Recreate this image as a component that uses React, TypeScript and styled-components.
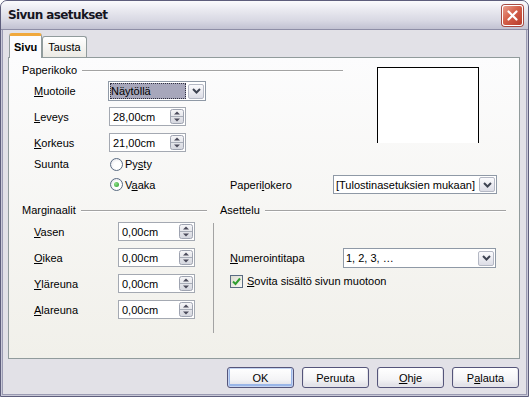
import styled, { createGlobalStyle } from 'styled-components';

const GlobalStyle = createGlobalStyle`
  html, body {
    margin: 0;
    padding: 0;
    background: #ffffff;
  }
  * {
    box-sizing: border-box;
  }
  body {
    font-family: "Liberation Sans", Arial, sans-serif;
    font-size: 11px;
    color: #000000;
  }
`;

const Window = styled.div`
  width: 529px;
  height: 397px;
  display: flex;
  flex-direction: column;
  background: #e2e1e7;
  border: 1px solid #5e5e7c;
  border-radius: 7px 7px 0 0;
  box-shadow: inset 0 0 0 1px #c9c9d8, inset 0 0 0 2px #9a9ab2;
  overflow: hidden;
`;

const TitleBar = styled.div`
  height: 29px;
  flex-shrink: 0;
  display: flex;
  align-items: center;
  justify-content: space-between;
  padding: 0 5px 0 7px;
  background: linear-gradient(#fbfbfd 0%, #e8e8ef 35%, #d8d8e3 70%, #c2c2d2 100%);
  border-bottom: 1px solid #8e8ea6;
`;

const Title = styled.span`
  font-family: "DejaVu Sans", "Liberation Sans", sans-serif;
  font-weight: bold;
  font-size: 12px;
  letter-spacing: -0.6px;
  color: #15151f;
`;

const CloseButton = styled.div`
  width: 21px;
  height: 21px;
  display: flex;
  align-items: center;
  justify-content: center;
  border: 1px solid #ffffff;
  border-radius: 3px;
  background: linear-gradient(135deg, #eaa08e 0%, #d4604a 45%, #b83c2c 100%);
  box-shadow: 0 0 0 1px #a84a42;
`;

const Body = styled.div`
  flex: 1;
  display: flex;
  flex-direction: column;
  padding: 3px 8px 0 7px;
`;

const TabStrip = styled.div`
  display: flex;
  align-items: flex-end;
  height: 24px;
  padding-left: 1px;
`;

const Tab = styled.div<{ $active?: boolean }>`
  position: relative;
  z-index: ${p => (p.$active ? 1 : 0)};
  height: ${p => (p.$active ? 25 : 21)}px;
  margin-bottom: ${p => (p.$active ? -1 : 0)}px;
  padding: 0 ${p => (p.$active ? 4 : 5)}px;
  display: flex;
  align-items: center;
  border: 1px solid #919b9c;
  border-top: ${p => (p.$active ? '3px solid #f0a83c' : '1px solid #919b9c')};
  border-bottom: none;
  border-radius: 3px 3px 0 0;
  background: ${p => (p.$active ? '#fcfcfe' : 'linear-gradient(#ffffff, #eceae4)')};
  font-weight: ${p => (p.$active ? 'bold' : 'normal')};
`;

const TabPanel = styled.div`
  height: 302px;
  display: flex;
  flex-direction: column;
  padding: 4px 13px 0 13px;
  border: 1px solid #919b9c;
  background: linear-gradient(#fcfcfd, #f1f0ea);
`;

const TopRow = styled.div`
  display: flex;
  align-items: flex-start;
`;

const FieldsColumn = styled.div`
  width: 321px;
  display: flex;
  flex-direction: column;
`;

const GroupHeader = styled.div`
  height: 16px;
  display: flex;
  align-items: center;
  white-space: nowrap;

  &::after {
    content: '';
    flex: 1;
    height: 1px;
    margin-left: 5px;
    background: #a3a3a3;
    box-shadow: 0 1px 0 #ffffff;
  }
`;

const FieldRow = styled.div<{ $top: number; $h?: number; $indent?: number }>`
  display: flex;
  align-items: center;
  margin-top: ${p => p.$top}px;
  height: ${p => p.$h ?? 19}px;
  padding-left: ${p => p.$indent ?? 12}px;
`;

const Label = styled.span<{ $w: number }>`
  width: ${p => p.$w}px;
  flex-shrink: 0;
  white-space: nowrap;
`;

const U = styled.span`
  text-decoration: underline;
`;

const SpinBox = styled.div<{ $w: number }>`
  width: ${p => p.$w}px;
  height: 19px;
  display: flex;
  align-items: center;
  justify-content: space-between;
  padding: 0 1px 0 3px;
  background: #ffffff;
  border: 1px solid #a4a9b2;
`;

const SpinButton = styled.div`
  width: 14px;
  height: 15px;
  display: flex;
`;

const Select = styled.div<{ $w: number; $h?: number }>`
  width: ${p => p.$w}px;
  height: ${p => p.$h ?? 19}px;
  display: flex;
  align-items: center;
  justify-content: space-between;
  padding: 1px;
  background: #ffffff;
  border: 1px solid #8f99a6;
`;

const SelectText = styled.span<{ $selected?: boolean }>`
  flex: 1;
  height: 100%;
  display: flex;
  align-items: center;
  padding-left: 1px;
  margin-right: 2px;
  white-space: nowrap;
  background: ${p => (p.$selected ? '#a7a7bb' : 'transparent')};
  outline: ${p => (p.$selected ? '1px dotted #303040' : 'none')};
  outline-offset: -1px;
`;

const DropButton = styled.div`
  width: 16px;
  height: 15px;
  flex-shrink: 0;
  display: flex;
  align-items: center;
  justify-content: center;
  border: 1px solid #b4b8c4;
  border-radius: 2px;
  background: linear-gradient(#fbfbfd, #dcdde6);
`;

const Preview = styled.div`
  width: 102px;
  height: 76px;
  margin: 5px 0 0 34px;
  background: #ffffff;
  border: 1px solid #000000;
  border-bottom: none;
`;

const RadioOption = styled.div<{ $w?: number }>`
  display: flex;
  align-items: center;
  gap: 2px;
  width: ${p => (p.$w ? `${p.$w}px` : 'auto')};
  flex-shrink: 0;
`;

const RadioCircle = styled.span<{ $checked?: boolean }>`
  width: 13px;
  height: 13px;
  border-radius: 50%;
  border: 1px solid #5a6b82;
  background: radial-gradient(circle at 60% 60%, #ffffff 40%, #dcdde4 100%);
  display: flex;
  align-items: center;
  justify-content: center;

  &::after {
    content: '';
    display: ${p => (p.$checked ? 'block' : 'none')};
    width: 5px;
    height: 5px;
    border-radius: 50%;
    background: radial-gradient(circle at 35% 35%, #8fe08a, #2c9c2c);
  }
`;

const CheckBox = styled.span`
  width: 13px;
  height: 13px;
  flex-shrink: 0;
  margin-right: 4px;
  display: flex;
  align-items: center;
  justify-content: center;
  border: 1px solid #5a6b82;
  background: linear-gradient(135deg, #dcdcd0, #f8f8f4);
`;

const BottomGrid = styled.div`
  display: grid;
  grid-template-columns: 185px 1px 1fr;
  column-gap: 6px;
  margin-top: 8px;
`;

const Column = styled.div`
  display: flex;
  flex-direction: column;
`;

const VSeparator = styled.div`
  margin-top: 21px;
  height: 110px;
  background: #a3a3a3;
`;

const ButtonRow = styled.div`
  display: flex;
  justify-content: flex-end;
  gap: 8px;
  padding: 8px 1px 0 0;
`;

const Button = styled.div<{ $default?: boolean }>`
  width: 67px;
  height: 21px;
  display: flex;
  align-items: center;
  justify-content: center;
  border: 1px solid #55557a;
  border-radius: 3px;
  background: linear-gradient(#ffffff 0%, #f4f4f6 60%, #dcdce4 100%);
  box-shadow: ${p => (p.$default ? 'inset 0 0 0 1px #c4d4f2, inset 0 -1px 0 2px #9ab6e8' : 'inset 0 -1px 0 1px #e4e4ea')};
`;

function Spin() {
  return (
    <SpinButton>
      <svg width="14" height="15" viewBox="0 0 14 15">
        <defs>
          <linearGradient id="spg" x1="0" y1="0" x2="0" y2="1">
            <stop offset="0" stopColor="#f6f6f8" />
            <stop offset="1" stopColor="#d4d6de" />
          </linearGradient>
        </defs>
        <rect x="0.5" y="0.5" width="13" height="14" rx="2" fill="url(#spg)" stroke="#9ea3b0" />
        <line x1="1" y1="7.5" x2="13" y2="7.5" stroke="#a8adb8" />
        <path d="M4 5.5 L7 2.5 L10 5.5 Z" fill="#4a4a5a" />
        <path d="M4 9.5 L7 12.5 L10 9.5 Z" fill="#4a4a5a" />
      </svg>
    </SpinButton>
  );
}

function Chevron() {
  return (
    <svg width="9" height="6" viewBox="0 0 9 6">
      <path d="M1 1 L4.5 4.5 L8 1" fill="none" stroke="#3e4452" strokeWidth="2" />
    </svg>
  );
}

function MarginRow({ top, children, value }: { top: number; children: React.ReactNode; value: string }) {
  return (
    <FieldRow $top={top}>
      <Label $w={84}>{children}</Label>
      <SpinBox $w={77}>
        {value}
        <Spin />
      </SpinBox>
    </FieldRow>
  );
}

export default function App() {
  return (
    <>
      <GlobalStyle />
      <Window>
        <TitleBar>
          <Title>Sivun asetukset</Title>
          <CloseButton>
            <svg width="11" height="11" viewBox="0 0 11 11">
              <path d="M1.5 1.5 L9.5 9.5 M9.5 1.5 L1.5 9.5" stroke="#ffffff" strokeWidth="2.2" strokeLinecap="round" />
            </svg>
          </CloseButton>
        </TitleBar>
        <Body>
          <TabStrip>
            <Tab $active>Sivu</Tab>
            <Tab>Tausta</Tab>
          </TabStrip>
          <TabPanel>
            <TopRow>
              <FieldsColumn>
                <GroupHeader>Paperikoko</GroupHeader>
                <FieldRow $top={3} $h={20}>
                  <Label $w={74}><U>M</U>uotoile</Label>
                  <Select $w={98} $h={20}>
                    <SelectText $selected>Näytöllä</SelectText>
                    <DropButton><Chevron /></DropButton>
                  </Select>
                </FieldRow>
                <FieldRow $top={6}>
                  <Label $w={75}><U>L</U>eveys</Label>
                  <SpinBox $w={77}>
                    28,00cm
                    <Spin />
                  </SpinBox>
                </FieldRow>
                <FieldRow $top={7}>
                  <Label $w={75}><U>K</U>orkeus</Label>
                  <SpinBox $w={77}>
                    21,00cm
                    <Spin />
                  </SpinBox>
                </FieldRow>
                <FieldRow $top={5} $h={14}>
                  <Label $w={76}>Suunta</Label>
                  <RadioOption>
                    <RadioCircle />
                    <span>Py<U>s</U>ty</span>
                  </RadioOption>
                </FieldRow>
              </FieldsColumn>
              <Preview />
            </TopRow>
            <FieldRow $top={4} $indent={88}>
              <RadioOption $w={120}>
                <RadioCircle $checked />
                <span>V<U>a</U>aka</span>
              </RadioOption>
              <Label $w={103}>Paperi<U>l</U>okero</Label>
              <Select $w={164}>
                <SelectText>[Tulostinasetuksien mukaan]</SelectText>
                <DropButton><Chevron /></DropButton>
              </Select>
            </FieldRow>
            <BottomGrid>
              <Column>
                <GroupHeader>Marginaalit</GroupHeader>
                <MarginRow top={4} value="0,00cm"><U>V</U>asen</MarginRow>
                <MarginRow top={7} value="0,00cm"><U>O</U>ikea</MarginRow>
                <MarginRow top={7} value="0,00cm"><U>Y</U>läreuna</MarginRow>
                <MarginRow top={7} value="0,00cm"><U>A</U>lareuna</MarginRow>
              </Column>
              <VSeparator />
              <Column>
                <GroupHeader>Asettelu</GroupHeader>
                <FieldRow $top={30} $h={20} $indent={10}>
                  <Label $w={113}><U>N</U>umerointitapa</Label>
                  <Select $w={153} $h={20}>
                    <SelectText>1, 2, 3, …</SelectText>
                    <DropButton><Chevron /></DropButton>
                  </Select>
                </FieldRow>
                <FieldRow $top={6} $h={14} $indent={10}>
                  <CheckBox>
                    <svg width="9" height="9" viewBox="0 0 9 9">
                      <path d="M1 4.5 L3.5 7 L8 1.5" fill="none" stroke="#2f9e2f" strokeWidth="2" />
                    </svg>
                  </CheckBox>
                  <span><U>S</U>ovita sisältö sivun muotoon</span>
                </FieldRow>
              </Column>
            </BottomGrid>
          </TabPanel>
          <ButtonRow>
            <Button $default>OK</Button>
            <Button>Peruuta</Button>
            <Button><U>O</U>hje</Button>
            <Button>P<U>a</U>lauta</Button>
          </ButtonRow>
        </Body>
      </Window>
    </>
  );
}
